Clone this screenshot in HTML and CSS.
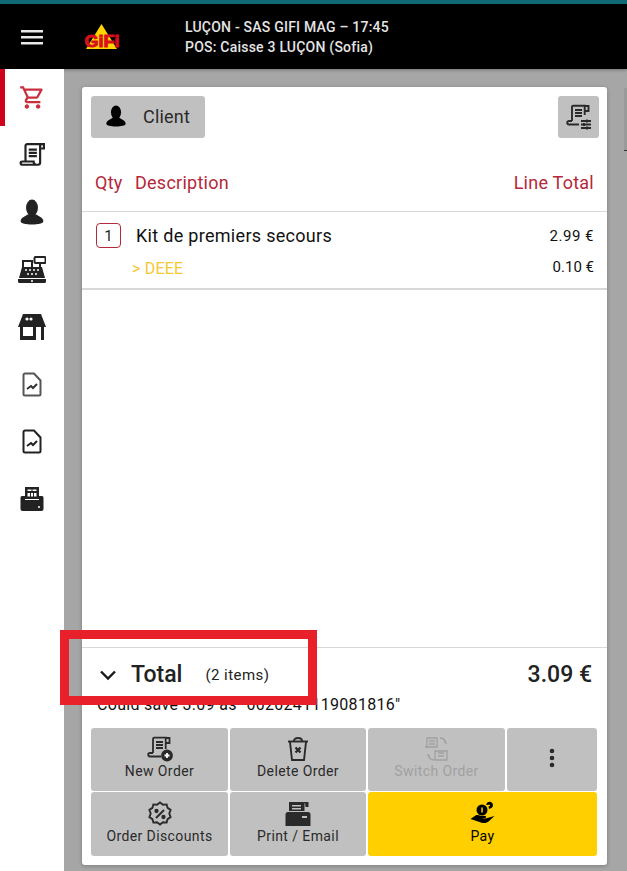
FILE: index.html
```html
<!DOCTYPE html>
<html lang="en">
<head>
  <meta charset="UTF-8">
  <meta name="viewport" content="width=device-width, initial-scale=1.0">
  <title>POS Register</title>
  <link rel="stylesheet" href="styles.css">
</head>
<body>
  <!-- Top bar -->
  <header class="topbar">
    <button class="menu-btn" aria-label="Menu">
      <svg width="24" height="24" viewBox="0 0 24 24"><path d="M1 5h22v2.400H1zM1 11h22v2.400H1zM1 17h22v2.400H1z" fill="#e8e8e8"/></svg>
    </button>
    <div class="logo">
      <svg width="36" height="26" viewBox="0 0 36 26">
        <path d="M17.500 0L33 25H2z" fill="#ffd400"/>
        <text x="0.500" y="23" textLength="35" lengthAdjust="spacingAndGlyphs" class="logo-text">GiFi</text>
      </svg>
    </div>
    <div class="store-info">
      <div>LUÇON - SAS GIFI MAG – 17:45</div>
      <div>POS: Caisse 3 LUÇON (Sofia)</div>
    </div>
  </header>

  <div class="layout">
    <!-- Side navigation -->
    <nav class="sidebar">
      <a class="nav-item active">
        <svg width="27" height="27" viewBox="0 0 24 24" fill="#c8303f"><path d="M15.550 13c.75 0 1.410-.41 1.750-1.030l3.580-6.490A.996.996 0 0 0 20.010 4H5.210l-.94-2H1v2h2l3.600 7.590-1.350 2.440C4.520 15.370 5.480 17 7 17h12v-2H7l1.100-2h7.450zM6.160 6h12.150l-2.760 5H8.530L6.160 6zM7 18c-1.100 0-1.990.9-1.990 2S5.900 22 7 22s2-.9 2-2-.9-2-2-2zm10 0c-1.100 0-1.990.9-1.990 2s.89 2 1.990 2 2-.9 2-2-.9-2-2-2z"/></svg>
      </a>
      <a class="nav-item">
        <svg width="26" height="26" viewBox="0 0 24 24" fill="none" stroke="#222" stroke-width="2"><path d="M6 18V3.500c0-.8.6-1.500 1.500-1.500H21c-1 0-1.500.7-1.500 1.500v15.500c0 1.200-1 2-2 2H3.500C2.500 21 1.500 20.300 1.500 19.300s.8-1.300 1.500-1.300h10.500c0 1.500.5 3 2.500 3"/><path d="M9 7h7.500M9 10h7.500M9 13h7.500"/><path d="M20 2h3v4h-3"/></svg>
      </a>
      <a class="nav-item">
        <svg width="26" height="26" viewBox="0 0 24 24" fill="#222"><ellipse cx="12" cy="8" rx="5.500" ry="7.500"/><path d="M1.500 20.500c0-3.500 5-5 7-6.500h7c2 1.500 7 3 7 6.500 0 2-5 3-10.500 3S1.500 22.500 1.500 20.500z"/></svg>
      </a>
      <a class="nav-item">
        <svg width="28" height="28" viewBox="0 0 28 28"><rect x="16.500" y="1" width="11" height="6" rx="1" fill="none" stroke="#222" stroke-width="2"/><path d="M21 7h2v4h-2z" fill="#222"/><rect x="5" y="5" width="9" height="7" fill="none" stroke="#222" stroke-width="2"/><path d="M4 11h20l3 11H1z" fill="#222"/><path d="M0 22h28v3.500a1.500 1.500 0 0 1-1.500 1.500h-25A1.500 1.500 0 0 1 0 25.500z" fill="#222"/><path d="M0 22h28v1H0z" fill="#fff"/><circle cx="14" cy="25" r="1" fill="#fff"/><g fill="#fff"><circle cx="8" cy="14" r="1"/><circle cx="12" cy="14" r="1"/><circle cx="16" cy="14" r="1"/><circle cx="20" cy="14" r="1"/><circle cx="10" cy="18" r="1"/><circle cx="14" cy="18" r="1"/><circle cx="18" cy="18" r="1"/></g></svg>
      </a>
      <a class="nav-item">
        <svg width="28" height="26" viewBox="0 0 28 26" fill="#222"><path d="M5 0h18l5 13H0z"/><circle cx="9" cy="5" r="1.600" fill="#fff"/><circle cx="13" cy="5" r="1.600" fill="#fff"/><path d="M2 13h3v13H2zM5 22h10v4H5zM15 13h3v13h-3zM23 13h3v13h-3z"/></svg>
      </a>
      <a class="nav-item">
        <svg width="20" height="25" viewBox="0 0 20 25" fill="none" stroke="#555" stroke-width="2"><path d="M3 1.500h9l6.500 7v13.500a1.500 1.500 0 0 1-1.500 1.500H3A1.500 1.500 0 0 1 1.500 22V3A1.500 1.500 0 0 1 3 1.500z"/><path d="M5 17l4-3 2 2 4-4" stroke="#333"/></svg>
      </a>
      <a class="nav-item">
        <svg width="20" height="25" viewBox="0 0 20 25" fill="none" stroke="#222" stroke-width="2"><path d="M3 1.500h9l6.500 7v13.500a1.500 1.500 0 0 1-1.500 1.500H3A1.500 1.500 0 0 1 1.500 22V3A1.500 1.500 0 0 1 3 1.500z"/><path d="M5 17l4-3 2 2 4-4"/></svg>
      </a>
      <a class="nav-item">
        <svg width="24" height="26" viewBox="0 0 24 26" fill="#222"><path d="M5 1h14v12H5z"/><path d="M2 10h3v4h14v-4h3a1.500 1.500 0 0 1 1.500 1.500V23a2 2 0 0 1-2 2h-19a2 2 0 0 1-2-2V11.500A1.500 1.500 0 0 1 2 10z"/><path d="M7.500 3.500h4V5h-4zM12.500 3.500h4V5h-4zM7.500 7h2.500v3.500H7.500zM11 7h2v3.500h-2zM14 7h2.500v3.500H14z" fill="#fff"/><circle cx="19" cy="21" r="1" fill="#fff"/></svg>
      </a>
    </nav>

    <main class="main">
      <section class="card">
        <div class="card-top">
          <button class="client-btn">
            <svg width="22" height="24" viewBox="0 0 24 24" fill="#000"><ellipse cx="12" cy="8" rx="5.500" ry="7.500"/><path d="M1.500 20.500c0-3.500 5-5 7-6.500h7c2 1.500 7 3 7 6.500 0 2-5 3-10.500 3S1.500 22.500 1.500 20.500z"/></svg>
            <span>Client</span>
          </button>
          <button class="settings-btn" aria-label="Order options">
            <svg width="26" height="26" viewBox="0 0 26 26" fill="none" stroke="#2a2a2a" stroke-width="1.900"><path d="M6 17V3c0-.8.6-1.300 1.300-1.300H20c-1 0-1.300.7-1.300 1.300v8"/><path d="M9 6h7M9 9h7M9 12h7"/><path d="M19 2h3.500v5H19"/><path d="M6 17H3c-1 0-1.800.7-1.800 1.600S2 20.500 3 20.500h10"/><path d="M15 17h10M15 20.500h10M15 24h10"/><path d="M21 15.500v3M18 19v3M21 22.500v3"/></svg>
          </button>
        </div>

        <div class="line-head">
          <span class="col-qty">Qty</span>
          <span class="col-desc">Description</span>
          <span class="col-total">Line Total</span>
        </div>

        <div class="line-item">
          <div class="line-main">
            <span class="qty-box">1</span>
            <span class="item-name">Kit de premiers secours</span>
            <span class="item-price">2.99 €</span>
          </div>
          <div class="line-sub">
            <span class="item-extra">&gt; DEEE</span>
            <span class="item-price sub-price">0.10 €</span>
          </div>
        </div>

        <div class="spacer"></div>

        <div class="total-row">
          <svg class="chevron" width="18" height="12" viewBox="0 0 18 12" fill="none" stroke="#1a1a1a" stroke-width="2.400"><path d="M2 2.500l7 7 7-7"/></svg>
          <span class="total-label">Total</span>
          <span class="total-count">(2 items)</span>
          <span class="total-amount">3.09 €</span>
        </div>
        <div class="save-note">Could save 3.09 as "0020241119081816"</div>

        <div class="actions">
          <button class="action">
            <svg width="28" height="26" viewBox="0 0 28 26" fill="none" stroke="#2a2a2a" stroke-width="1.800"><path d="M7 17V3c0-.8.6-1.300 1.300-1.300H21c-1 0-1.300.7-1.300 1.300v10"/><path d="M10 6h7M10 9h7M10 12h7"/><path d="M20 2h3.500v5H20"/><path d="M7 17H4c-1 0-1.800.7-1.800 1.600S3 20.500 4 20.500h11"/><circle cx="21" cy="19.500" r="5" fill="#2a2a2a"/><path d="M18.500 19.500h5M21 17v5" stroke="#fff"/></svg>
            <span>New Order</span>
          </button>
          <button class="action">
            <svg width="24" height="26" viewBox="0 0 24 26" fill="none" stroke="#2a2a2a" stroke-width="1.900"><path d="M2 5.500h20"/><path d="M8 5c0-2 1.500-3 4-3s4 1 4 3"/><path d="M4 6l2 18h12l2-18"/><path d="M9.500 11.500l5 5M14.500 11.500l-5 5" stroke-width="2.400"/></svg>
            <span>Delete Order</span>
          </button>
          <button class="action is-disabled">
            <svg width="28" height="26" viewBox="0 0 28 26" fill="none" stroke="#a0a0a0" stroke-width="1.300"><path d="M4 12V2h10v9H2"/><path d="M6 5h6M6 8h6"/><path d="M24 14v10H12v-9h12"/><path d="M15 17h6M15 20h6"/><path d="M17 2c3 0 5 2 6 5l-2-1M11 24c-3 0-5-2-6-5l2 1"/></svg>
            <span>Switch Order</span>
          </button>
          <button class="action" aria-label="More">
            <svg width="8" height="22" viewBox="0 0 8 22" fill="#2a2a2a"><circle cx="4" cy="4" r="2.300"/><circle cx="4" cy="11" r="2.300"/><circle cx="4" cy="18" r="2.300"/></svg>
          </button>
          <button class="action">
            <svg width="26" height="26" viewBox="0 0 26 26" fill="none" stroke="#2a2a2a" stroke-width="1.900"><path d="M13 1.500l3 2.200 3.600-.3 1 3.500 3 2-1.300 3.600 1.300 3.600-3 2-1 3.500-3.600-.3-3 2.200-3-2.200-3.600.3-1-3.500-3-2 1.300-3.600-1.300-3.600 3-2 1-3.500 3.600.3z"/><path d="M9 17l8-8"/><circle cx="9.500" cy="10" r="1.200" fill="#2a2a2a"/><circle cx="16.500" cy="16" r="1.200" fill="#2a2a2a"/></svg>
            <span>Order Discounts</span>
          </button>
          <button class="action">
            <svg width="26" height="26" viewBox="0 0 26 26" fill="#2a2a2a"><path d="M4 1h17c-1 .5-1.500 1.500-1.500 2.500V10H4z"/><path d="M20 1h3.500v5H20.500z"/><path d="M7 4h9v1.500H7zM7 7h9v1.500H7z" fill="#c0c0c0"/><path d="M3 11h20a2.500 2.500 0 0 1 2.500 2.500V25H.5V13.500A2.500 2.500 0 0 1 3 11z"/><path d="M17 15h5v2h-5z" fill="#c0c0c0"/></svg>
            <span>Print / Email</span>
          </button>
          <button class="action action-pay">
            <svg width="26" height="26" viewBox="0 0 26 26" fill="#000"><circle cx="12" cy="9" r="5.500"/><path d="M16 3.500a4 4 0 0 1 5-2.500a3.500 3.500 0 0 1 .5 6L19 8l-.5-2.500 1.500-.5-.5-1.500-2 .5z"/><path d="M11.300 6.500h1.500v5h-1.500z" fill="#ffcf00"/><path d="M.5 18l5-3.500c2-.8 3.500-.3 5 .5h4.500c1.500 0 1.500 2 0 2h-4l4.500.5 9-2.500-6 5.500c-3 2-6 2-9 .5l-3-1z"/></svg>
            <span>Pay</span>
          </button>
        </div>
      </section>
    </main>
  </div>

  <!-- Strip of dimmed page at the right edge -->
  <div class="edge-tab"></div>
  <!-- Annotation drawn on the screenshot -->
  <div class="annotation"></div>
</body>
</html>
```

FILE: styles.css
```css
* {
  box-sizing: border-box;
}
html, body {
  height: 100%;
}
body {
  margin: 0;
  height: 871px;
  overflow: hidden;
  font-family: Roboto, "Liberation Sans", sans-serif;
  color: #222;
  background-color: #a6a6a6;
  display: flex;
  flex-direction: column;
  position: relative;
}
button {
  font-family: inherit;
  border: none;
  cursor: pointer;
}
.topbar {
  height: 69px;
  flex: none;
  background-color: #000;
  border-top: 4px solid #0f6a75;
  display: flex;
  align-items: center;
  color: #e4e4e4;
  box-shadow: 0 1px 3px rgba(0,0,0,0.3);
}
.menu-btn {
  width: 64px;
  height: 64px;
  background: none;
  display: flex;
  align-items: center;
  justify-content: center;
  padding: 0;
}
.logo {
  width: 121px;
  padding-left: 20px;
  display: flex;
  align-items: center;
}
.logo-text {
  font-family: "Liberation Sans", sans-serif;
  font-weight: 700;
  font-size: 17px;
  fill: #d8101c;
  stroke: #d8101c;
  stroke-width: 1px;
}
.store-info {
  font-size: 14px;
  line-height: 20px;
  font-weight: 500;
  letter-spacing: 0.22px;
}
.layout {
  flex: 1;
  display: flex;
  min-height: 0;
}
.sidebar {
  width: 64px;
  flex: none;
  background-color: #fff;
  display: flex;
  flex-direction: column;
}
.nav-item {
  height: 57.3px;
  display: flex;
  align-items: center;
  justify-content: center;
  border-left: 5px solid transparent;
  padding-right: 5px;
}
.nav-item.active {
  border-left-color: #d0021b;
}
.main {
  flex: 1;
  padding: 18px 20px 6px 18px;
  min-width: 0;
}
.card {
  height: 100%;
  background-color: #fff;
  border-radius: 3px;
  box-shadow: 0 1px 4px rgba(0,0,0,0.25);
  display: flex;
  flex-direction: column;
}
.card-top {
  display: flex;
  justify-content: space-between;
  padding: 9px 8px 0 9px;
}
.client-btn {
  width: 114px;
  height: 42px;
  background-color: #c0c0c0;
  border-radius: 3px;
  display: flex;
  align-items: center;
  padding: 0 0 2px 14px;
  gap: 16px;
  font-size: 18px;
  letter-spacing: 0.2px;
  color: #2a2a2a;
}
.settings-btn {
  width: 41px;
  height: 42px;
  background-color: #c0c0c0;
  border-radius: 3px;
  padding: 0;
  display: flex;
  align-items: center;
  justify-content: center;
}
.line-head {
  height: 74px;
  display: flex;
  align-items: center;
  padding: 16px 13px 0 13px;
  font-size: 18px;
  letter-spacing: 0.25px;
  color: #b5273a;
  border-bottom: 1px solid #d8d8d8;
}
.col-qty {
  width: 40px;
}
.col-total {
  margin-left: auto;
}
.line-item {
  height: 78px;
  padding: 11px 13px 0 14px;
  border-bottom: 2px solid #d8d8d8;
}
.line-main {
  display: flex;
  align-items: center;
}
.qty-box {
  width: 25px;
  height: 25px;
  border: 1px solid #b5273a;
  border-radius: 4px;
  display: flex;
  align-items: center;
  justify-content: center;
  font-size: 15px;
}
.item-name {
  margin-left: 15px;
  font-size: 18px;
  letter-spacing: 0.3px;
  color: #111;
}
.item-price {
  margin-left: auto;
  font-size: 15px;
  letter-spacing: 0.5px;
  color: #111;
}
.sub-price {
  letter-spacing: 0;
  margin-bottom: 2px;
}
.line-sub {
  display: flex;
  align-items: center;
  margin-top: 10px;
}
.item-extra {
  margin-left: 36px;
  font-size: 16px;
  letter-spacing: 0.2px;
  color: #f5c832;
}
.spacer {
  flex: 1;
  border-bottom: 1px solid #d8d8d8;
}
.total-row {
  height: 47px;
  flex: none;
  display: flex;
  align-items: center;
  padding: 6px 15px 0 17px;
}
.chevron {
  margin-right: 14px;
}
.total-label {
  font-size: 23px;
  font-weight: 500;
  color: #222;
}
.total-count {
  font-size: 15px;
  margin-left: 23px;
  letter-spacing: 0.45px;
}
.total-amount {
  margin-left: auto;
  font-size: 23px;
  font-weight: 500;
}
.save-note {
  height: 33px;
  flex: none;
  padding-left: 15px;
  font-size: 16px;
  letter-spacing: 0.3px;
  color: #111;
}
.actions {
  display: grid;
  grid-template-columns: 137px 136px 137px 90px;
  grid-template-rows: 63px 64px;
  gap: 1px 2px;
  padding: 0 10px 9px 9px;
}
.action {
  background-color: #c0c0c0;
  border-radius: 3px;
  padding: 0 0 4px;
  display: flex;
  flex-direction: column;
  align-items: center;
  justify-content: center;
  font-size: 14px;
  letter-spacing: 0.4px;
  color: #2a2a2a;
  gap: 1px;
}
.action.is-disabled {
  color: #a0a0a0;
}
.action-pay {
  grid-column: span 2;
  background-color: #ffcf00;
  color: #000;
}
.edge-tab {
  position: absolute;
  right: 0;
  top: 88px;
  width: 3px;
  height: 63px;
  background-color: #9a9a9a;
  border-bottom: 1px solid #333;
}
.annotation {
  position: absolute;
  left: 60px;
  top: 630px;
  width: 257px;
  height: 75px;
  border: 9px solid #e8202a;
}
```
